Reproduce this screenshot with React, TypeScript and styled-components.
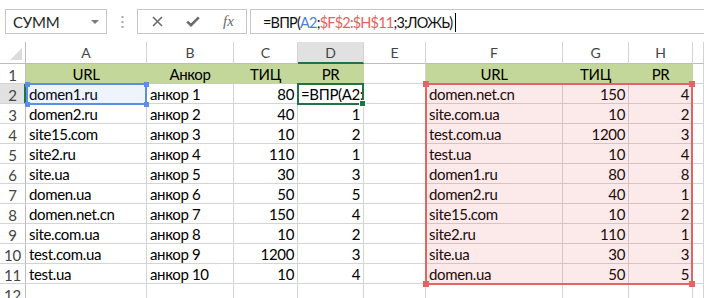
import React from 'react';
import styled, { createGlobalStyle } from 'styled-components';

const GlobalStyle = createGlobalStyle`
  html, body {
    margin: 0;
    padding: 0;
    background: #fff;
    overflow: hidden;
  }
  body {
    font-family: Lato, 'Liberation Sans', sans-serif;
  }
`;

// column widths incl. right gridline: row header, A..H
const COLS = [26, 121, 87, 64, 66, 62, 137, 66, 64];
const HEAD_H = 22;
const ROW_H = 20;
const colLeft = (i: number) => COLS.slice(0, i).reduce((a, b) => a + b, 0);
const rowTop = (r: number) => HEAD_H + (r - 1) * ROW_H;

const GRID = '#d4d4d4';
const GREEN = '#c4d79b';
const ACTIVE = '#217346';

const FormulaBar = styled.div`
  display: flex;
  align-items: stretch;
  height: 42px;
  padding: 9px 0 8px 5px;
  box-sizing: border-box;
`;

const NameBox = styled.div`
  width: 102px;
  box-sizing: border-box;
  border: 1px solid #c6c6c6;
  display: flex;
  align-items: center;
  padding: 1px 0 0 7px;
  font-size: 15px;
  letter-spacing: -0.2px;
  color: #262626;

  span {
    flex: 1;
  }
`;

const DropArrow = styled.i`
  width: 0;
  height: 0;
  margin-right: 7px;
  border-left: 4px solid transparent;
  border-right: 4px solid transparent;
  border-top: 4px solid #7a7a7a;
`;

const Grip = styled.div`
  width: 30px;
  display: flex;
  justify-content: center;
  align-items: center;

  svg {
    display: block;
  }
`;

const ButtonBox = styled.div`
  width: 110px;
  box-sizing: border-box;
  border: 1px solid #c6c6c6;
  display: flex;
  align-items: center;
  gap: 23px;
  padding: 0 0 0 14px;
  color: #6b6b6b;

  .fx {
    font-family: 'Liberation Serif', serif;
    font-style: italic;
    font-size: 15px;
    color: #6b6b6b;
  }
`;

const FormulaBox = styled.div`
  flex: 1;
  margin-left: 3px;
  border: 1px solid #c6c6c6;
  border-right: none;
  display: flex;
  align-items: center;
  padding: 1px 0 0 12px;
  font-size: 14.5px;
  letter-spacing: -0.8px;
  color: #111;
  white-space: nowrap;
`;

const Ref = styled.span<{ $tone: 'blue' | 'red' }>`
  color: ${({ $tone }) => ($tone === 'blue' ? '#4f7fd4' : '#e45f5f')};
`;

const Caret = styled.span`
  display: inline-block;
  width: 1px;
  height: 19px;
  margin-left: 3px;
  background: #000;
`;

const Sheet = styled.div`
  position: relative;
  display: grid;
  grid-template-columns: ${COLS.map((c) => `${c}px`).join(' ')} 1fr;
  grid-template-rows: ${HEAD_H}px;
  grid-auto-rows: ${ROW_H}px;
`;

const Corner = styled.div`
  box-sizing: border-box;
  border-right: 1px solid #bdbdbd;
  border-bottom: 1px solid #bdbdbd;
  display: flex;
  align-items: flex-end;
  justify-content: flex-end;
  padding: 0 3px 3px 0;
`;

const ColHead = styled.div<{ $active?: boolean }>`
  box-sizing: border-box;
  border-right: 1px solid ${GRID};
  border-bottom: ${({ $active }) => ($active ? `2px solid ${ACTIVE}` : '1px solid #bdbdbd')};
  background: ${({ $active }) => ($active ? '#e1e1e1' : '#fff')};
  color: #444;
  font-size: 14px;
  line-height: 22px;
  text-align: center;
`;

const RowHead = styled.div<{ $active?: boolean }>`
  box-sizing: border-box;
  border-right: ${({ $active }) => ($active ? `2px solid ${ACTIVE}` : '1px solid #bdbdbd')};
  border-bottom: 1px solid ${GRID};
  background: ${({ $active }) => ($active ? '#e1e1e1' : '#fff')};
  color: #444;
  font-size: 15px;
  line-height: 19px;
  padding-top: 2px;
  letter-spacing: -0.3px;
  text-align: center;
  padding-left: ${({ $active }) => ($active ? '1px' : '0')};
  overflow: hidden;
`;

const Cell = styled.div<{ $align?: 'left' | 'right' | 'center'; $fill?: string }>`
  box-sizing: border-box;
  padding: 2px 3px 0;
  border-right: 1px solid ${({ $fill }) => $fill ?? GRID};
  border-bottom: 1px solid ${({ $fill }) => $fill ?? GRID};
  background: ${({ $fill }) => $fill ?? '#fff'};
  color: #000;
  font-size: 15px;
  line-height: 17px;
  letter-spacing: -0.35px;
  text-align: ${({ $align }) => $align ?? 'left'};
  white-space: nowrap;
  overflow: hidden;
`;

const RangeBox = styled.div<{ $left: number; $top: number; $w: number; $h: number; $line: string; $tint: string }>`
  position: absolute;
  left: ${({ $left }) => $left}px;
  top: ${({ $top }) => $top}px;
  width: ${({ $w }) => $w}px;
  height: ${({ $h }) => $h}px;
  box-sizing: border-box;
  border: 2px solid ${({ $line }) => $line};
  background: ${({ $tint }) => $tint};
  pointer-events: none;
`;

const Handle = styled.i<{ $pos: 'tl' | 'tr' | 'bl' | 'br'; $color: string; $size: number }>`
  position: absolute;
  width: ${({ $size }) => $size}px;
  height: ${({ $size }) => $size}px;
  background: ${({ $color }) => $color};
  ${({ $pos, $size }) => ($pos[0] === 't' ? `top: -${$size / 2 + 1}px;` : `bottom: -${$size / 2 + 1}px;`)}
  ${({ $pos, $size }) => ($pos[1] === 'l' ? `left: -${$size / 2 + 1}px;` : `right: -${$size / 2 + 1}px;`)}
`;

const ActiveBox = styled.div<{ $left: number; $top: number; $w: number; $h: number }>`
  position: absolute;
  left: ${({ $left }) => $left}px;
  top: ${({ $top }) => $top}px;
  width: ${({ $w }) => $w}px;
  height: ${({ $h }) => $h}px;
  box-sizing: border-box;
  border: 2px solid ${ACTIVE};
  pointer-events: none;
`;

const FillHandle = styled.i`
  position: absolute;
  right: -4px;
  bottom: -4px;
  width: 5px;
  height: 5px;
  background: ${ACTIVE};
  border: 1px solid #fff;
`;

const left = [
  ['domen1.ru', 'анкор 1', '80', '=ВПР(A2;$F$2:$H$11;3;ЛОЖЬ)'],
  ['domen2.ru', 'анкор 2', '40', '1'],
  ['site15.com', 'анкор 3', '10', '2'],
  ['site2.ru', 'анкор 4', '110', '1'],
  ['site.ua', 'анкор 5', '30', '3'],
  ['domen.ua', 'анкор 6', '50', '5'],
  ['domen.net.cn', 'анкор 7', '150', '4'],
  ['site.com.ua', 'анкор 8', '10', '2'],
  ['test.com.ua', 'анкор 9', '1200', '3'],
  ['test.ua', 'анкор 10', '10', '4'],
];

const right = [
  ['domen.net.cn', '150', '4'],
  ['site.com.ua', '10', '2'],
  ['test.com.ua', '1200', '3'],
  ['test.ua', '10', '4'],
  ['domen1.ru', '80', '8'],
  ['domen2.ru', '40', '1'],
  ['site15.com', '10', '2'],
  ['site2.ru', '110', '1'],
  ['site.ua', '30', '3'],
  ['domen.ua', '50', '5'],
];

const letters = ['A', 'B', 'C', 'D', 'E', 'F', 'G', 'H', ''];

function App() {
  return (
    <>
      <GlobalStyle />
      <FormulaBar>
        <NameBox>
          <span>СУММ</span>
          <DropArrow />
        </NameBox>
        <Grip>
          <svg width="3" height="12" viewBox="0 0 3 12">
            <rect x="0.5" y="0" width="2" height="2" fill="#a8a8a8" />
            <rect x="0.5" y="5" width="2" height="2" fill="#a8a8a8" />
            <rect x="0.5" y="10" width="2" height="2" fill="#a8a8a8" />
          </svg>
        </Grip>
        <ButtonBox>
          <svg width="11" height="11" viewBox="0 0 11 11">
            <path d="M1 1 L10 10 M10 1 L1 10" stroke="#6b6b6b" strokeWidth="1.6" />
          </svg>
          <svg width="14" height="11" viewBox="0 0 14 11">
            <path d="M1.2 5.6 L5 9.2 L12.8 1.4" stroke="#6b6b6b" strokeWidth="2.6" fill="none" />
          </svg>
          <span className="fx">fx</span>
        </ButtonBox>
        <FormulaBox>
          =ВПР(<Ref $tone="blue">A2</Ref>;<Ref $tone="red">$F$2:$H$11</Ref>;3;ЛОЖЬ)
          <Caret />
        </FormulaBox>
      </FormulaBar>

      <Sheet>
        <Corner>
          <svg width="12" height="12" viewBox="0 0 12 12">
            <polygon points="12,0 12,12 0,12" fill="#dcdcdc" />
          </svg>
        </Corner>
        {letters.map((l, i) => (
          <ColHead key={i} $active={l === 'D'}>
            {l}
          </ColHead>
        ))}

        <RowHead>1</RowHead>
        <Cell $align="center" $fill={GREEN}>URL</Cell>
        <Cell $align="center" $fill={GREEN}>Анкор</Cell>
        <Cell $align="center" $fill={GREEN}>ТИЦ</Cell>
        <Cell $align="center" $fill={GREEN}>PR</Cell>
        <Cell />
        <Cell $align="center" $fill={GREEN}>URL</Cell>
        <Cell $align="center" $fill={GREEN}>ТИЦ</Cell>
        <Cell $align="center" $fill={GREEN}>PR</Cell>
        <Cell />

        {left.map((row, i) => (
          <React.Fragment key={i}>
            <RowHead $active={i === 0}>{i + 2}</RowHead>
            <Cell>{row[0]}</Cell>
            <Cell>{row[1]}</Cell>
            <Cell $align="right">{row[2]}</Cell>
            <Cell $align={i === 0 ? 'left' : 'right'}>{row[3]}</Cell>
            <Cell />
            <Cell>{right[i][0]}</Cell>
            <Cell $align="right">{right[i][1]}</Cell>
            <Cell $align="right">{right[i][2]}</Cell>
            <Cell />
          </React.Fragment>
        ))}

        <RowHead>12</RowHead>
        {letters.map((_, i) => (
          <Cell key={i} />
        ))}

        <RangeBox
          $left={colLeft(1)}
          $top={rowTop(2) - 1}
          $w={COLS[1]}
          $h={ROW_H + 2}
          $line="#5b8ee6"
          $tint="rgba(70, 120, 220, 0.09)"
        >
          <Handle $pos="tl" $color="#5b8ee6" $size={5} />
          <Handle $pos="tr" $color="#5b8ee6" $size={5} />
          <Handle $pos="bl" $color="#5b8ee6" $size={5} />
          <Handle $pos="br" $color="#5b8ee6" $size={5} />
        </RangeBox>

        <RangeBox
          $left={colLeft(6) - 1}
          $top={rowTop(2) - 1}
          $w={COLS[6] + COLS[7] + COLS[8] + 1}
          $h={ROW_H * 10 + 2}
          $line="#e26464"
          $tint="rgba(232, 96, 96, 0.13)"
        >
          <Handle $pos="tl" $color="#e26464" $size={6} />
          <Handle $pos="tr" $color="#e26464" $size={6} />
          <Handle $pos="bl" $color="#e26464" $size={6} />
          <Handle $pos="br" $color="#e26464" $size={6} />
        </RangeBox>

        <ActiveBox $left={colLeft(4) - 1} $top={rowTop(2) - 1} $w={COLS[4] + 1} $h={ROW_H + 2}>
          <FillHandle />
        </ActiveBox>
      </Sheet>
    </>
  );
}

export default App;
